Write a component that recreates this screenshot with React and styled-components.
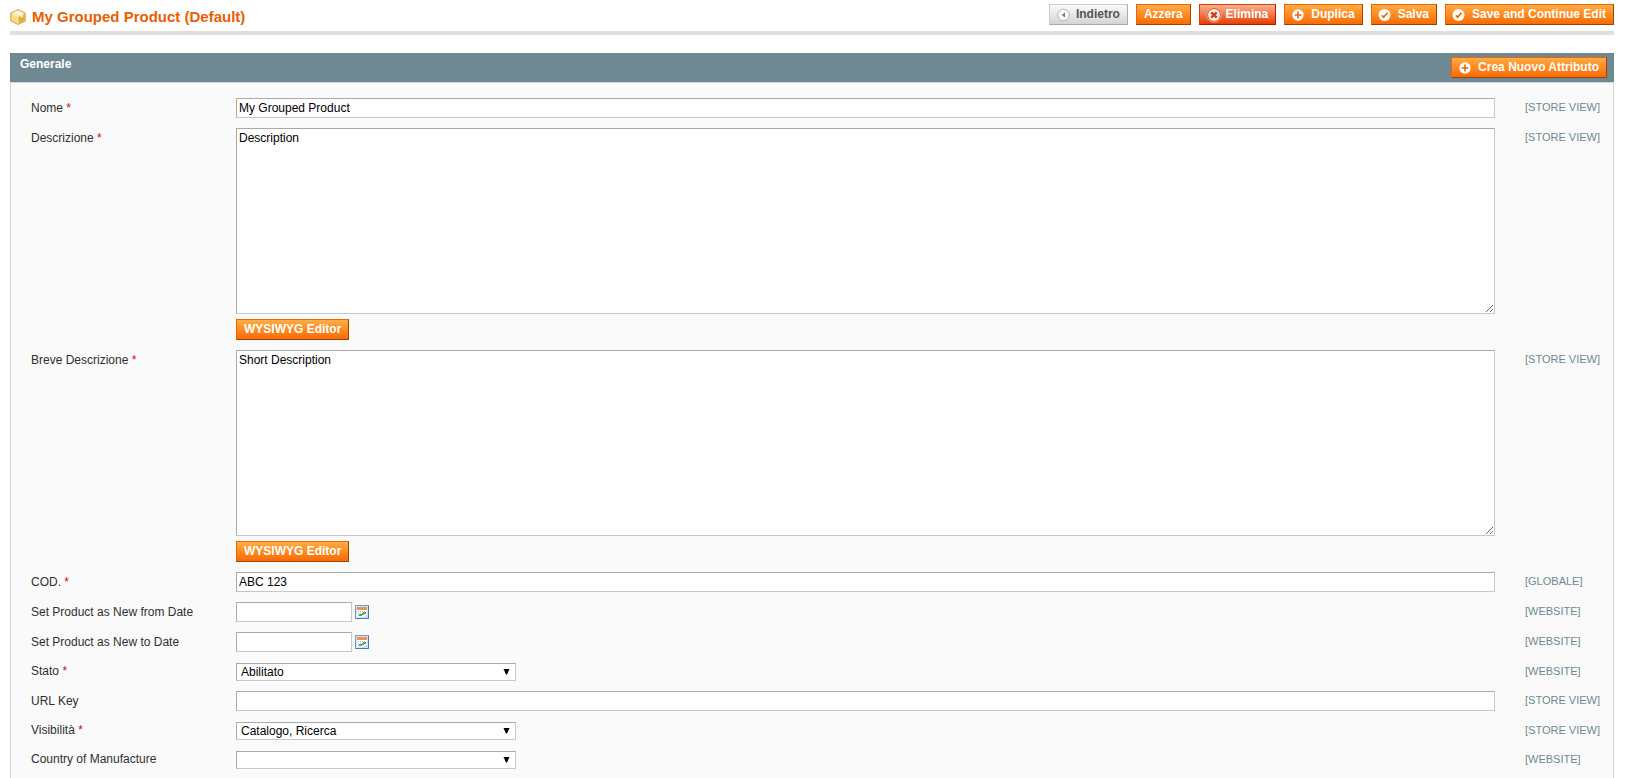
import React from "react";
import styled, { createGlobalStyle, css } from "styled-components";

const GlobalStyle = createGlobalStyle`
  * { box-sizing: border-box; }
  body {
    margin: 0;
    background: #fff;
    color: #2f2f2f;
    font: 12px/16px "Liberation Sans", Arial, Helvetica, sans-serif;
  }
`;

const Page = styled.main`
  display: flex;
  flex-direction: column;
  min-height: 100vh;
  padding: 4px 27px 0 10px;
`;

const Header = styled.header`
  display: flex;
  justify-content: space-between;
  padding-bottom: 6px;
  margin-bottom: 18px;
  border-bottom: 4px solid #dfdfdf;
`;

const Title = styled.h1`
  display: flex;
  align-items: center;
  gap: 6px;
  margin: 0;
  padding-top: 5px;
  color: #eb5e00;
  font-size: 15px;
  line-height: 16px;
`;

const Actions = styled.div`
  display: flex;
  gap: 8px;
`;

const tones = {
  primary: css`
    border-color: #ed6502 #a04300 #a04300 #ed6502;
    background: linear-gradient(#ffac47, #ff8a20 50%, #f76b07);
    color: #fff;
  `,
  danger: css`
    border-color: #d24403 #a92000 #a92000 #d24403;
    background: linear-gradient(#fbb08d, #f3764a 50%, #e63d00);
    color: #fff;
  `,
  back: css`
    border-color: #ccc #aaa #aaa #ccc;
    background: linear-gradient(#fafafa, #e8e8e8 50%, #d4d4d4);
    color: #555;
  `,
};

const ButtonBox = styled.button`
  display: inline-flex;
  align-items: center;
  gap: 4px;
  height: 21px;
  padding: 0 7px 1px ${(p) => (p.$icon ? "6px" : "7px")};
  border: 1px solid;
  font: bold 12px/18px "Liberation Sans", Arial, Helvetica, sans-serif;
  white-space: nowrap;
  cursor: pointer;
  ${(p) => tones[p.$tone]}

  svg { flex: none; margin-top: 1px; }
`;

const Panel = styled.section`
  display: flex;
  flex-direction: column;
  flex: 1;
`;

const PanelHead = styled.div`
  display: flex;
  justify-content: space-between;
  padding: 4px 7px 4px 10px;
  background: #6f8992;
`;

const PanelTitle = styled.h2`
  margin: -1px 0 0;
  color: #fff;
  font-size: 12px;
  line-height: 16px;
`;

const Fields = styled.form`
  flex: 1;
  padding: 10px 0 4px 20px;
  border: 1px solid #d6d6d6;
  border-bottom: 0;
  background: #fafafa;
`;

const Row = styled.div`
  display: grid;
  grid-template-columns: 205px minmax(0, 1fr) 88px;
  padding: ${(p) => (p.$select ? "6px 0 5px" : "5px 0")};
`;

const Label = styled.label`
  padding-top: ${(p) => (p.$select ? "0" : "2px")};
`;

const Required = styled.span`
  color: #d40707;
`;

const Value = styled.div`
  display: flex;
  flex-direction: ${(p) => (p.$stacked ? "column" : "row")};
  align-items: ${(p) => (p.$stacked ? "flex-start" : "center")};
  gap: ${(p) => (p.$stacked ? "5px" : "3px")};
  padding-right: 30px;
`;

const Scope = styled.span`
  padding-top: ${(p) => (p.$select ? "0" : "1px")};
  color: #6f8992;
  font-size: 11px;
`;

const control = css`
  margin: 0;
  border: 1px solid;
  border-color: #aaa #c8c8c8 #c8c8c8 #aaa;
  border-radius: 0;
  background: #fff;
  color: #000;
  font: 12px "Liberation Sans", Arial, Helvetica, sans-serif;
`;

const TextInput = styled.input`
  ${control}
  width: ${(p) => (p.$short ? "116px" : "100%")};
  height: 20px;
  padding: 2px;
`;

const TextArea = styled.textarea`
  ${control}
  display: block;
  width: 100%;
  height: 186px;
  padding: 2px;
  resize: vertical;
`;

const SelectWrap = styled.div`
  position: relative;
  width: 280px;
  height: 18px;

  svg {
    position: absolute;
    top: 6px;
    right: 6px;
    pointer-events: none;
  }
`;

const SelectInput = styled.select`
  ${control}
  display: block;
  width: 100%;
  height: 18px;
  padding: 0 20px 0 4px;
  appearance: none;
`;

const DateButton = styled.button`
  display: block;
  padding: 0;
  border: 0;
  background: none;
  line-height: 0;
  cursor: pointer;
`;

const BoxIcon = () => (
  <svg width="16" height="16" viewBox="0 0 16 16" aria-hidden="true">
    <path d="M8 .6 15.2 4v8L8 15.4.8 12V4z" fill="#f3cb66" stroke="#c9a050" strokeWidth="1" strokeLinejoin="round" />
    <path d="M8 1.2 14.4 4.3 8 7.6 1.6 4.3z" fill="#fbedc0" />
    <path d="M8 7.6 14.4 4.4v7.3L8 14.8z" fill="#e5af3c" />
    <path d="M1.6 4.4 8 7.6v7.2l-6.4-3.1z" fill="#f9dc85" />
    <path d="M4.5 2.8 11 6v2.8l1.6-.9V5.2L6.2 2z" fill="#fffbe8" />
    <path d="M8 7.8v6.7M2 4.8l6 3 6-3" fill="none" stroke="#fff3c8" strokeWidth=".8" />
  </svg>
);

const BackIcon = () => (
  <svg width="16" height="16" viewBox="0 0 16 16" aria-hidden="true">
    <circle cx="7.5" cy="8" r="5.8" fill="#fafafa" stroke="#b5b5b5" />
    <path d="M9 5.4v5.2L5.8 8z" fill="#777" />
  </svg>
);

const DeleteIcon = () => (
  <svg width="16" height="16" viewBox="0 0 16 16" aria-hidden="true">
    <circle cx="8" cy="8" r="7.3" fill="#d9502a" stroke="#f6b79d" strokeWidth=".8" />
    <circle cx="8" cy="8" r="6" fill="#fdeee8" />
    <path d="m5.3 5.3 5.4 5.4m0-5.4-5.4 5.4" stroke="#cf4318" strokeWidth="2.5" />
  </svg>
);

const AddIcon = () => (
  <svg width="16" height="16" viewBox="0 0 16 16" aria-hidden="true">
    <circle cx="7" cy="8" r="5.7" fill="#fff" />
    <path d="M7 4.6v6.8M3.6 8h6.8" stroke="#e9680b" strokeWidth="1.6" />
  </svg>
);

const SaveIcon = () => (
  <svg width="16" height="16" viewBox="0 0 16 16" aria-hidden="true">
    <circle cx="6.5" cy="8" r="6" fill="#fff" />
    <path d="m3.9 8.3 1.8 1.9 3.8-4.4" fill="none" stroke="#e9680b" strokeWidth="1.7" />
  </svg>
);

const CalendarIcon = () => (
  <svg width="14" height="14" viewBox="0 0 14 14" aria-hidden="true">
    <path d="M.5.5h13v13H.5z" fill="#d3e3f6" stroke="#6d9bd6" />
    <path d="M13.5.5v13H.5" fill="none" stroke="#4679c0" />
    <path d="M2 2h10v3H2z" fill="#f98f4e" />
    <path d="M2 5h10v7H2z" fill="#fff" />
    <path d="M3 6h1v1H3zM5 6h1v1H5zM7 6h1v1H7zM9 6h1v1H9zM3 8h1v1H3zM5 8h1v1H5zM3 10h1v1H3z" fill="#a3b8cf" />
    <path d="M8 7h3v2H8zM7 8h2v2H7zM4 9h3v2H4z" fill="#5fa852" />
    <path d="m9 12 3-3v3z" fill="#c7dbf2" />
  </svg>
);

const ArrowIcon = () => (
  <svg width="7" height="6" viewBox="0 0 7 6" aria-hidden="true">
    <path d="M.5 0h6L4 5.6H3z" fill="#000" />
  </svg>
);

const icons = { back: BackIcon, remove: DeleteIcon, add: AddIcon, save: SaveIcon };

function ActionButton({ tone = "primary", icon, children }) {
  const Icon = icons[icon];
  return (
    <ButtonBox type="button" $tone={tone} $icon={Boolean(icon)}>
      {Icon && <Icon />}
      {children}
    </ButtonBox>
  );
}

function Control({ id, type, value }) {
  if (type === "editor") {
    return (
      <>
        <TextArea id={id} defaultValue={value} />
        <ActionButton>WYSIWYG Editor</ActionButton>
      </>
    );
  }
  if (type === "date") {
    return (
      <>
        <TextInput id={id} type="text" $short />
        <DateButton type="button" aria-label="Select Date">
          <CalendarIcon />
        </DateButton>
      </>
    );
  }
  if (type === "select") {
    return (
      <SelectWrap>
        <SelectInput id={id} defaultValue={value}>
          <option value={value}>{value}</option>
        </SelectInput>
        <ArrowIcon />
      </SelectWrap>
    );
  }
  return <TextInput id={id} type="text" defaultValue={value} />;
}

function Field({ id, label, type, value = "", required, scope }) {
  const select = type === "select";
  return (
    <Row $select={select}>
      <Label htmlFor={id} $select={select}>
        {label} {required && <Required>*</Required>}
      </Label>
      <Value $stacked={type === "editor"}>
        <Control id={id} type={type} value={value} />
      </Value>
      <Scope $select={select}>[{scope}]</Scope>
    </Row>
  );
}

const fields = [
  { id: "name", label: "Nome", value: "My Grouped Product", required: true, scope: "STORE VIEW" },
  { id: "description", label: "Descrizione", type: "editor", value: "Description", required: true, scope: "STORE VIEW" },
  { id: "short_description", label: "Breve Descrizione", type: "editor", value: "Short Description", required: true, scope: "STORE VIEW" },
  { id: "sku", label: "COD.", value: "ABC 123", required: true, scope: "GLOBALE" },
  { id: "news_from_date", label: "Set Product as New from Date", type: "date", scope: "WEBSITE" },
  { id: "news_to_date", label: "Set Product as New to Date", type: "date", scope: "WEBSITE" },
  { id: "status", label: "Stato", type: "select", value: "Abilitato", required: true, scope: "WEBSITE" },
  { id: "url_key", label: "URL Key", scope: "STORE VIEW" },
  { id: "visibility", label: "Visibilità", type: "select", value: "Catalogo, Ricerca", required: true, scope: "STORE VIEW" },
  { id: "country", label: "Country of Manufacture", type: "select", scope: "WEBSITE" },
];

export default function App() {
  return (
    <>
      <GlobalStyle />
      <Page>
        <Header>
          <Title>
            <BoxIcon />
            My Grouped Product (Default)
          </Title>
          <Actions>
            <ActionButton tone="back" icon="back">Indietro</ActionButton>
            <ActionButton>Azzera</ActionButton>
            <ActionButton tone="danger" icon="remove">Elimina</ActionButton>
            <ActionButton icon="add">Duplica</ActionButton>
            <ActionButton icon="save">Salva</ActionButton>
            <ActionButton icon="save">Save and Continue Edit</ActionButton>
          </Actions>
        </Header>
        <Panel>
          <PanelHead>
            <PanelTitle>Generale</PanelTitle>
            <ActionButton icon="add">Crea Nuovo Attributo</ActionButton>
          </PanelHead>
          <Fields>
            {fields.map((field) => (
              <Field key={field.id} {...field} />
            ))}
          </Fields>
        </Panel>
      </Page>
    </>
  );
}
